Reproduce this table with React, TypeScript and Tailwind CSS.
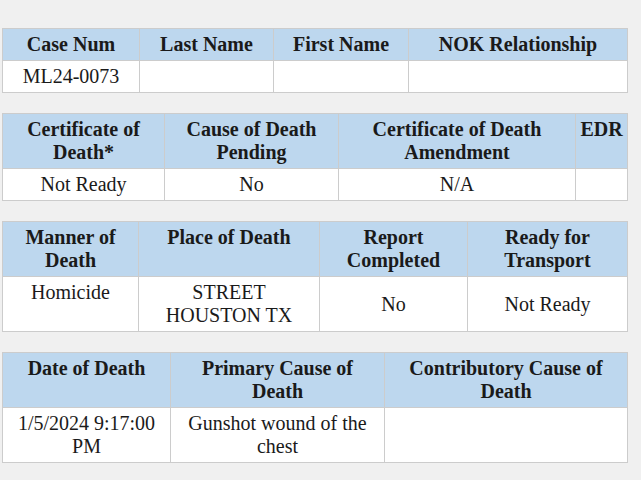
const tables = [
  {
    grid: "grid grid-cols-[137px_134px_135px_218px]",
    head: ["Case Num", "Last Name", "First Name", "NOK Relationship"],
    body: ["ML24-0073", "", "", ""],
    top: [false, false, false, false],
  },
  {
    grid: "grid grid-cols-[162px_174px_237px_51px]",
    head: ["Certificate of Death*", "Cause of Death Pending", "Certificate of Death Amendment", "EDR"],
    body: ["Not Ready", "No", "N/A", ""],
    top: [false, false, false, false],
  },
  {
    grid: "grid grid-cols-[136px_181px_148px_159px]",
    head: ["Manner of Death", "Place of Death", "Report Completed", "Ready for Transport"],
    body: ["Homicide", "STREET HOUSTON TX", "No", "Not Ready"],
    top: [true, true, false, false],
  },
  {
    grid: "grid grid-cols-[168px_214px_242px]",
    head: ["Date of Death", "Primary Cause of Death", "Contributory Cause of Death"],
    body: ["1/5/2024 9:17:00 PM", "Gunshot wound of the chest", ""],
    top: [true, true, true],
  },
];

const App = () => {
  return (
    <div className="min-h-[480px] w-[641px] bg-[#f0f0f0] pt-[28px] pl-[2px] flex flex-col gap-[20px] font-['Liberation_Serif',serif] text-[20px] leading-[23px] text-[#1a1a1a]">
      {tables.map((t, ti) => (
        <div key={ti} className="w-[626px] border border-[#cccccc]">
          <div className={`${t.grid} bg-[#bdd7ee] border-b border-[#cccccc]`}>
            {t.head.map((h, i) => (
              <div
                key={i}
                className={`px-1 py-1 text-center font-bold ${
                  i < t.head.length - 1 ? "border-r border-[#cccccc]" : ""
                }`}
              >
                {h}
              </div>
            ))}
          </div>
          <div className={`${t.grid} bg-white`}>
            {t.body.map((c, i) => (
              <div
                key={i}
                className={`px-1 py-1 flex justify-center text-center ${
                  t.top[i] ? "items-start" : "items-center"
                } ${i < t.body.length - 1 ? "border-r border-[#cccccc]" : ""}`}
              >
                {c}
              </div>
            ))}
          </div>
        </div>
      ))}
    </div>
  );
};

export default App;
